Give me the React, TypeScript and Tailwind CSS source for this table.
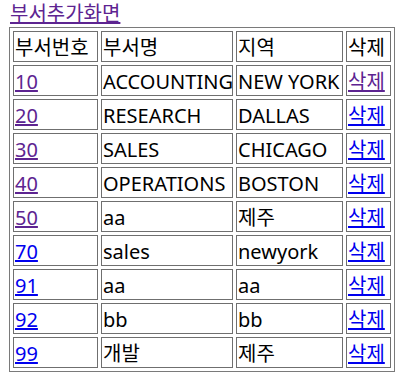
const rows = [
  { no: '10', name: 'ACCOUNTING', loc: 'NEW YORK', visited: true, delVisited: true },
  { no: '20', name: 'RESEARCH', loc: 'DALLAS', visited: true },
  { no: '30', name: 'SALES', loc: 'CHICAGO', visited: true },
  { no: '40', name: 'OPERATIONS', loc: 'BOSTON', visited: true },
  { no: '50', name: 'aa', loc: '제주', visited: true },
  { no: '70', name: 'sales', loc: 'newyork' },
  { no: '91', name: 'aa', loc: 'aa' },
  { no: '92', name: 'bb', loc: 'bb' },
  { no: '99', name: '개발', loc: '제주' },
];

const cell =
  'border border-[#6f6f6f] px-px pt-[3px] pb-0 h-[31px] leading-[26px] whitespace-nowrap overflow-hidden align-middle';

function Link({ visited, children }: { visited?: boolean; children: React.ReactNode }) {
  return (
    <a href="#" className={visited ? 'underline text-[#5d2491]' : 'underline text-[#0000ee]'}>
      {children}
    </a>
  );
}

export default function App() {
  return (
    <div
      className="min-h-[390px] bg-white pl-[9px] text-[20px] text-black"
      style={{ fontFamily: '"Noto Sans", "Noto Sans CJK KR", sans-serif' }}
    >
      {/* 상단 링크 */}
      <div className="h-[27px] leading-[27px] pl-px">
        <Link visited>부서추가화면</Link>
      </div>

      <table className="table-fixed w-[386px] border-separate border-spacing-[3px] border border-[#7a7a7a]">
        <colgroup>
          <col className="w-[85px]" />
          <col className="w-[132px]" />
          <col className="w-[107px]" />
          <col className="w-[45px]" />
        </colgroup>
        <tbody>
          <tr>
            <td className={cell}>부서번호</td>
            <td className={cell}>부서명</td>
            <td className={cell}>지역</td>
            <td className={cell}>삭제</td>
          </tr>
          {rows.map((r) => (
            <tr key={r.no}>
              <td className={cell}>
                <Link visited={r.visited}>{r.no}</Link>
              </td>
              <td className={cell}>{r.name}</td>
              <td className={cell}>{r.loc}</td>
              <td className={cell}>
                <Link visited={r.delVisited}>삭제</Link>
              </td>
            </tr>
          ))}
        </tbody>
      </table>
    </div>
  );
}
